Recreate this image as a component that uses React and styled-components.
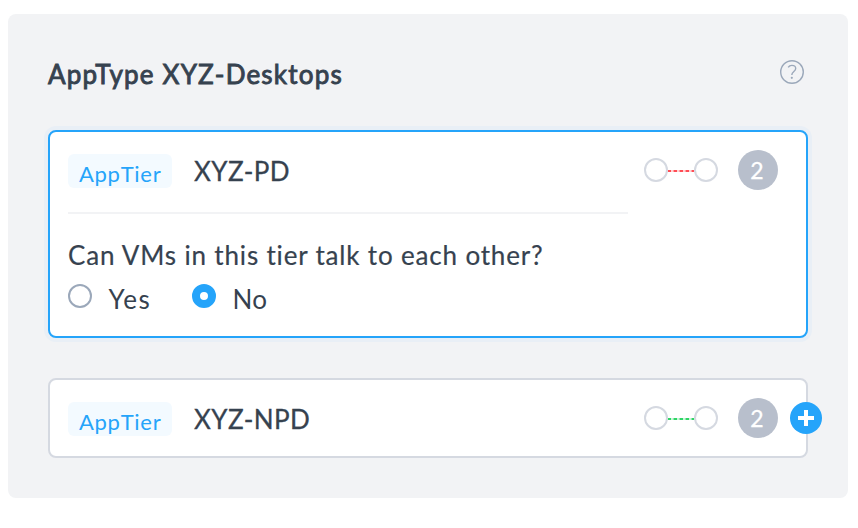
import React from 'react';
import styled, { createGlobalStyle } from 'styled-components';

const Global = createGlobalStyle`
  *, *::before, *::after { box-sizing: border-box; }
  body { margin: 0; background: #fff; font-family: Lato, "Open Sans", sans-serif; color: #36424f; }
`;

const Panel = styled.main`
  width: 840px;
  height: 484px;
  margin: 14px 10px 16px 8px;
  padding: 46px 40px 40px;
  background: #f2f3f5;
  border-radius: 8px;
`;

const Header = styled.header`
  display: flex;
  justify-content: space-between;
  align-items: flex-start;
  height: 70px;
  padding-right: 4px;
`;

const Title = styled.h1`
  margin: 0;
  font-size: 26px;
  line-height: 28px;
  font-weight: 400;
  letter-spacing: 1.2px;
  white-space: nowrap;
  -webkit-text-stroke: 0.9px currentColor;
`;

const HelpIcon = styled.svg`
  display: block;
  width: 24px;
  height: 24px;
`;

const Card = styled.section`
  position: relative;
  height: ${(p) => (p.$active ? 208 : 80)}px;
  margin-bottom: 40px;
  padding: 18px 28px 0 18px;
  background: #fff;
  border: 2px solid ${(p) => (p.$active ? '#25a4fa' : '#d5d9e1')};
  border-radius: 8px;
  box-shadow: ${(p) => (p.$active ? '0 0 0 4px #e9eff6' : 'none')};
`;

const TierRow = styled.div`
  display: flex;
  align-items: center;
  height: 40px;
`;

const Tag = styled.span`
  width: 104px;
  height: 34px;
  margin: 2px 22px 0 0;
  padding-left: 11px;
  border-radius: 6px;
  background: #f3faff;
  color: #25a4fa;
  font-size: 22px;
  line-height: 40px;
  letter-spacing: 0.7px;
  font-kerning: none;
  white-space: nowrap;
`;

const TierName = styled.h2`
  margin: 0;
  padding-top: 1px;
  flex: 1;
  font-size: 26px;
  line-height: 40px;
  font-weight: 400;
  letter-spacing: 0.4px;
  -webkit-text-stroke: 0.3px currentColor;
`;

const Link = styled.svg`
  width: 74px;
  height: 24px;
  margin-right: 20px;
`;

const Count = styled.span`
  width: 40px;
  height: 40px;
  border-radius: 50%;
  background: #b8bfcc;
  color: #fff;
  font-size: 23px;
  line-height: 40px;
  padding-right: 2px;
  text-align: center;
  -webkit-text-stroke: 0.3px currentColor;
`;

const Divider = styled.hr`
  width: 560px;
  height: 2px;
  margin: 22px 0 0;
  border: 0;
  background: #f2f3f5;
`;

const Question = styled.p`
  margin: 26px 0 0;
  font-size: 26px;
  line-height: 30px;
  letter-spacing: 0.83px;
  white-space: nowrap;
  -webkit-text-stroke: 0.2px currentColor;
`;

const Options = styled.div`
  display: flex;
  margin-top: 14px;
`;

const Option = styled.label`
  display: flex;
  width: 124px;
  height: 30px;
  font-size: 26px;
  line-height: 30px;
  letter-spacing: ${(p) => p.$tracking}px;
`;

const Radio = styled.span`
  width: 24px;
  height: 24px;
  margin-right: 16.5px;
  border: ${(p) => (p.$checked ? '8px solid #25a4fa' : '2px solid #9ba8ba')};
  border-radius: 50%;
`;

const AddButton = styled.button`
  position: absolute;
  right: -16px;
  top: 22px;
  width: 32px;
  height: 32px;
  padding: 0;
  border: 0;
  border-radius: 50%;
  background: #25a4fa;
`;

const PlusIcon = styled.svg`
  display: block;
  width: 32px;
  height: 32px;
`;

function Tier({ name, line }) {
  return (
    <TierRow>
      <Tag>AppTier</Tag>
      <TierName>{name}</TierName>
      <Link viewBox="0 0 74 24" fill="none">
        <path d="M23 13H51" stroke={line} strokeWidth="2" strokeOpacity="0.25" />
        <path d="M24 13H50" stroke={line} strokeWidth="2" strokeDasharray="3.4 2.6" strokeDashoffset="0.4" />
        <circle cx="12" cy="12" r="11" stroke="#d5d9e1" strokeWidth="2" />
        <circle cx="62" cy="12" r="11" stroke="#d5d9e1" strokeWidth="2" />
      </Link>
      <Count>2</Count>
    </TierRow>
  );
}

export default function App() {
  return (
    <>
      <Global />
      <Panel>
        <Header>
          <Title>AppType XYZ-Desktops</Title>
          <HelpIcon viewBox="0 0 24 24" fill="none" stroke="#9ba8ba" strokeWidth="1.4">
            <circle cx="12" cy="12" r="11.3" />
            <path d="M8.2 7.4C9 6.1 10.3 5.4 11.9 5.4c2.2 0 3.8 1.2 3.8 3.1 0 2.9-3.9 3-3.9 6.4" />
            <circle cx="11.8" cy="17.8" r="1.1" fill="#9ba8ba" stroke="none" />
          </HelpIcon>
        </Header>
        <Card $active>
          <Tier name="XYZ-PD" line="#ff4d55" />
          <Divider />
          <Question>Can VMs in this tier talk to each other?</Question>
          <Options>
            <Option $tracking={1.4}><Radio />Yes</Option>
            <Option $tracking={0.4}><Radio $checked />No</Option>
          </Options>
        </Card>
        <Card>
          <Tier name="XYZ-NPD" line="#2fd566" />
          <AddButton aria-label="Add tier">
            <PlusIcon viewBox="0 0 32 32"><path d="M16 8V24M8 16H24" stroke="#fff" strokeWidth="4" /></PlusIcon>
          </AddButton>
        </Card>
      </Panel>
    </>
  );
}
